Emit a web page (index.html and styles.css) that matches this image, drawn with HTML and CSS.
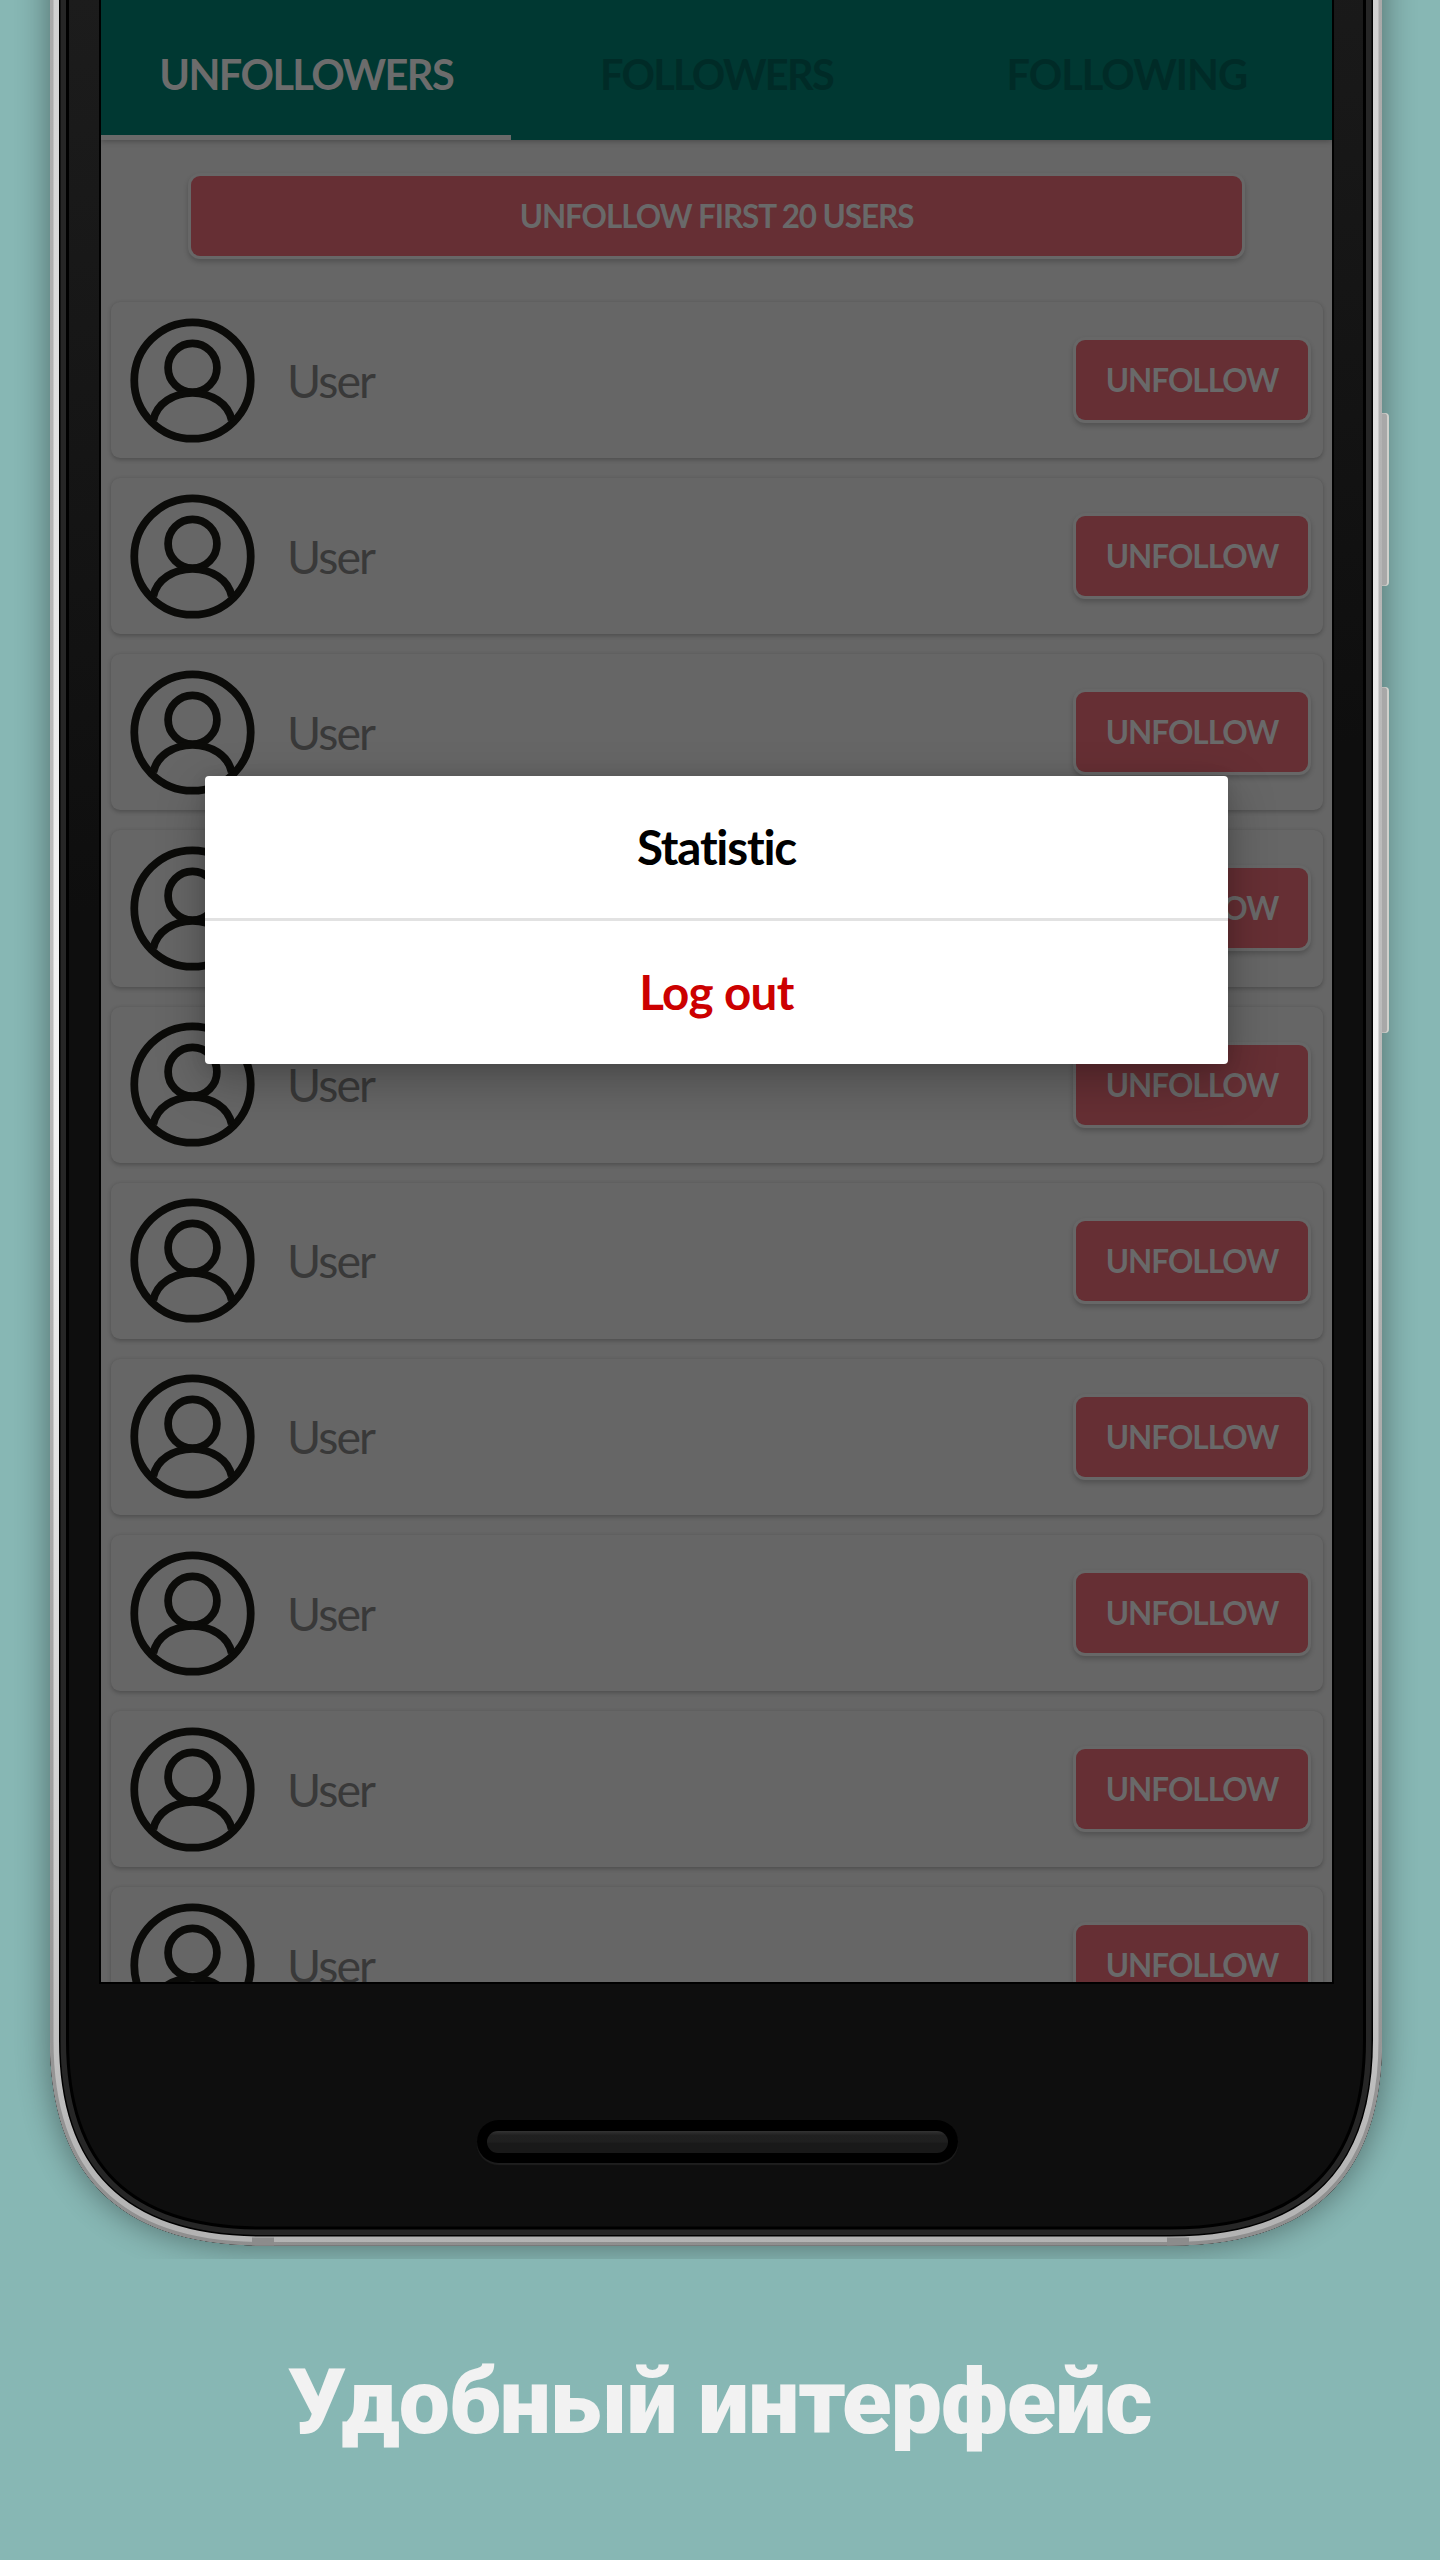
FILE: index.html
```html
<!DOCTYPE html>
<html lang="ru">
<head>
<meta charset="utf-8">
<title>Удобный интерфейс</title>
<link rel="stylesheet" href="styles.css">
</head>
<body>
<svg width="0" height="0" class="defs">
  <symbol id="avatar" viewBox="0 0 126 126">
    <g fill="none" stroke="#0b0b09" stroke-width="7.8">
      <circle cx="63" cy="63" r="58.7"/>
      <circle cx="63" cy="50.2" r="24.6"/>
      <path d="M23.5 103C27 86 44 75.600 63 75.600S99 86 102.500 103"/>
    </g>
  </symbol>
</svg>
<main class="stage">
  <svg class="phone-frame" width="1440" height="2259" viewBox="0 0 1440 2259">
    <defs>
      <path id="body" d="M50 -60V2040C50 2175 120 2245.500 262 2245.500H1170C1312 2245.500 1382 2175 1382 2040V-60Z"/>
      <clipPath id="clip"><use href="#body"/></clipPath>
      <filter id="shade" filterUnits="userSpaceOnUse" x="-60" y="-160" width="1560" height="2600"><feGaussianBlur stdDeviation="17"/></filter>
      <linearGradient id="rim" gradientUnits="userSpaceOnUse" x1="0" y1="0" x2="0" y2="2259">
        <stop offset="0" stop-color="#d0d0d0"/><stop offset=".38" stop-color="#f0f0f0"/><stop offset=".5" stop-color="#f2f2f2"/><stop offset=".84" stop-color="#cdcdcd"/><stop offset=".96" stop-color="#b6b6b6"/><stop offset="1" stop-color="#b2b2b2"/>
      </linearGradient>
      <linearGradient id="edge" gradientUnits="userSpaceOnUse" x1="0" y1="0" x2="0" y2="2259">
        <stop offset="0" stop-color="#a9a9a9"/><stop offset=".42" stop-color="#bdbdbd"/><stop offset="1" stop-color="#8e8e8e"/>
      </linearGradient>
      <linearGradient id="glare" gradientUnits="userSpaceOnUse" x1="60" y1="0" x2="180" y2="900">
        <stop offset="0" stop-color="#1c1c1c"/><stop offset="1" stop-color="#0e0e0e"/>
      </linearGradient>
    </defs>
    <use href="#body" fill="#000" opacity=".42" filter="url(#shade)"/>
    <g fill="#d0d1cc">
      <rect x="1370" y="413" width="19" height="173" rx="4"/>
      <rect x="1370" y="687" width="19" height="346" rx="4"/>
    </g>
    <g fill="#a8a8a8">
      <rect x="1370" y="413.5" width="17" height="172" rx="3"/>
      <rect x="1370" y="687.5" width="17" height="345" rx="3"/>
    </g>
    <use href="#body" fill="url(#glare)"/>
    <g clip-path="url(#clip)" fill="none">
      <use href="#body" stroke="#000" stroke-width="38"/>
      <use href="#body" stroke="#262626" stroke-width="32"/>
      <use href="#body" stroke="#000" stroke-width="21"/>
      <use href="#body" stroke="url(#rim)" stroke-width="18"/>
      <use href="#body" stroke="url(#edge)" stroke-width="7"/>
      <path d="M252 2237.500h22v9h-22zM1167 2237.500h22v9h-22z" fill="#8c8c8c"/>
    </g>
  </svg>

  <section class="screen">
    <nav class="tabs">
      <div class="tab active"><span>UNFOLLOWERS</span></div>
      <div class="tab"><span>FOLLOWERS</span></div>
      <div class="tab last"><span>FOLLOWING</span></div>
    </nav>
    <div class="btn btn-all"><span>UNFOLLOW FIRST 20 USERS</span></div>
    <div class="list">
      <div class="card"><svg class="avatar"><use href="#avatar"/></svg><span class="name">User</span><div class="btn"><span>UNFOLLOW</span></div></div>
      <div class="card"><svg class="avatar"><use href="#avatar"/></svg><span class="name">User</span><div class="btn"><span>UNFOLLOW</span></div></div>
      <div class="card"><svg class="avatar"><use href="#avatar"/></svg><span class="name">User</span><div class="btn"><span>UNFOLLOW</span></div></div>
      <div class="card"><svg class="avatar"><use href="#avatar"/></svg><span class="name"></span><div class="btn"><span>UNFOLLOW</span></div></div>
      <div class="card"><svg class="avatar"><use href="#avatar"/></svg><span class="name">User</span><div class="btn"><span>UNFOLLOW</span></div></div>
      <div class="card"><svg class="avatar"><use href="#avatar"/></svg><span class="name">User</span><div class="btn"><span>UNFOLLOW</span></div></div>
      <div class="card"><svg class="avatar"><use href="#avatar"/></svg><span class="name">User</span><div class="btn"><span>UNFOLLOW</span></div></div>
      <div class="card"><svg class="avatar"><use href="#avatar"/></svg><span class="name">User</span><div class="btn"><span>UNFOLLOW</span></div></div>
      <div class="card"><svg class="avatar"><use href="#avatar"/></svg><span class="name">User</span><div class="btn"><span>UNFOLLOW</span></div></div>
      <div class="card"><svg class="avatar"><use href="#avatar"/></svg><span class="name">User</span><div class="btn"><span>UNFOLLOW</span></div></div>
    </div>
    <div class="dialog">
      <div class="option stat">Statistic</div>
      <div class="option logout">Log out</div>
    </div>
  </section>

  <div class="chin"><div class="speaker"><div class="grille"></div></div></div>
  <h1 class="caption">Удобный интерфейс</h1>
</main>
</body>
</html>
```
FILE: styles.css
```css
* { box-sizing: border-box; }
body { margin: 0; background: #87b7b4; }
.defs { position: absolute; }
.stage {
  position: relative;
  width: 1440px;
  height: 2560px;
  overflow: hidden;
  font-family: Lato, "Open Sans", sans-serif;
}
.phone-frame { position: absolute; left: 0; top: 0; overflow: hidden; }
.screen {
  position: relative;
  width: 1231px;
  height: 1982px;
  margin-left: 101px;
  background: #666;
  overflow: hidden;
  box-shadow: 0 0 0 2px #000;
}
.tabs {
  display: flex;
  height: 140px;
  background: #003832;
  box-shadow: 0 1px 6px rgba(0, 0, 0, .3);
}
.tab {
  flex: 1;
  display: flex;
  justify-content: center;
  padding-top: 49px;
  color: #002b27;
  font-size: 41.5px;
  line-height: 50px;
  font-weight: 700;
  letter-spacing: -1.75px;
  white-space: nowrap;
}
.tab.active { color: #6c6c6c; border-bottom: 5px solid #696969; letter-spacing: -1.6px; }
.tab.last { letter-spacing: -1px; }
.btn {
  display: flex;
  align-items: center;
  justify-content: center;
  flex: none;
  width: 232px;
  height: 80px;
  border-radius: 9px;
  background: #662f34;
  color: #696969;
  font-size: 31.5px;
  line-height: 40px;
  font-weight: 700;
  letter-spacing: -1px;
  white-space: nowrap;
  box-shadow: 0 0 0 3px #676767, 0 3px 5px 3px rgba(0, 0, 0, .2);
}
.btn-all { width: 1051px; margin: 36px 0 0 90px; letter-spacing: -1.1px; }
.list { display: flex; flex-direction: column; gap: 20px; padding: 46px 9px 0 10px; }
.card {
  display: flex;
  align-items: center;
  flex: none;
  height: 156.15px;
  padding: 0 15px 0 19px;
  border-radius: 9px;
  background: #666;
  box-shadow: 0 1.500px 4px rgba(0, 0, 0, .24);
}
.avatar { width: 125px; height: 125px; flex: none; }
.name {
  flex: 1;
  padding: 0 0 1px 32px;
  color: #393939;
  font-size: 46.5px;
  line-height: 58px;
  font-weight: 400;
  letter-spacing: -1.9px;
}
.dialog {
  position: absolute;
  left: 104px;
  top: 776px;
  width: 1023px;
  height: 287.500px;
  border-radius: 4px;
  background: #fff;
  box-shadow: 0 16px 48px rgba(0, 0, 0, .28), 0 2px 16px rgba(0, 0, 0, .1);
}
.option {
  display: flex;
  align-items: center;
  justify-content: center;
  height: 142px;
  padding-bottom: 2px;
  font-size: 47.5px;
  font-weight: 700;
  color: #000;
  letter-spacing: -1.2px;
}
.option.logout { height: 145.5px; border-top: 3.500px solid #e2e2e2; color: #c00; letter-spacing: -.6px; }
.chin { position: relative; display: flex; justify-content: center; height: 277px; padding: 137.5px 6px 0 0; }
.speaker {
  width: 481px;
  height: 43px;
  padding: 11px 10px;
  border-radius: 21.5px;
  background: #000;
  box-shadow: 0 2px 1px #1e1e1e;
}
.grille {
  height: 22px;
  border-radius: 11px;
  background: linear-gradient(#333, #202020 20%, #1f1f1f 50%, #191919 55%, #191919);
}
.caption {
  margin: 90px 0 0;
  text-align: center;
  color: #f2f2f2;
  font: 900 91px/107px Roboto, sans-serif;
  letter-spacing: -1px;
}
```
